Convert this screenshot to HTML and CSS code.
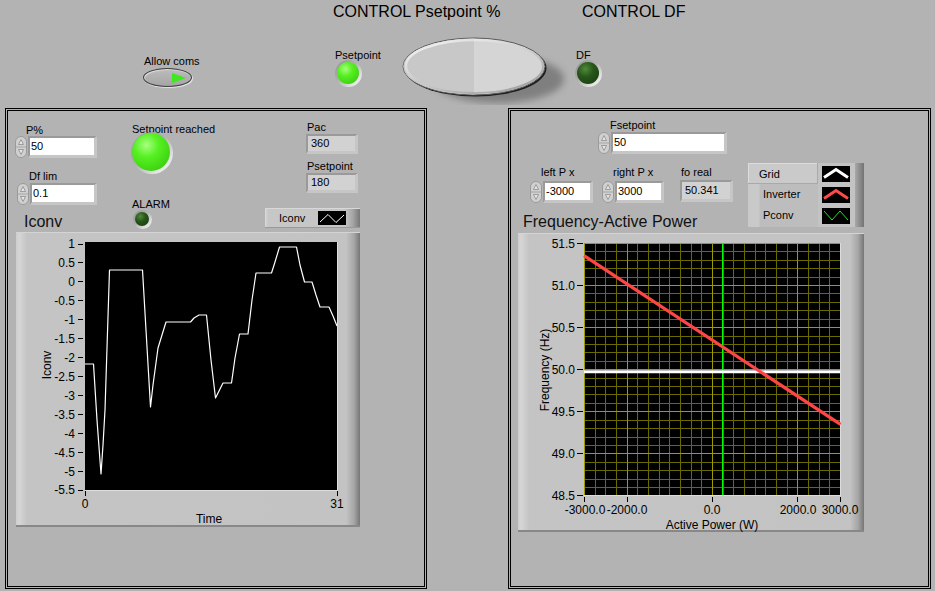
FILE: index.html
```html
<!DOCTYPE html>
<html lang="en">
<head>
<meta charset="utf-8">
<title>Front Panel</title>
<link rel="stylesheet" href="styles.css">
</head>
<body>
<div class="page">
  <header class="top">
    <div class="allow">
      <div class="lbl">Allow coms</div>
      <div class="toggle"><span class="tri"></span></div>
    </div>
    <div class="grp-pset">
      <div class="title">CONTROL Psetpoint %</div>
      <div class="pset-row">
        <div class="ledblock pset-led">
          <div class="lbl">Psetpoint</div>
          <div class="ring r27"><div class="led on"></div></div>
        </div>
        <svg class="bigbtn" width="170" height="70" viewBox="0 0 170 70">
          <defs>
            <filter id="sb" x="-30%" y="-30%" width="160%" height="160%"><feGaussianBlur stdDeviation="3.5"/></filter>
            <clipPath id="lh"><rect x="0" y="0" width="74" height="70"/></clipPath>
            <linearGradient id="hl" x1="0" y1="0" x2="1" y2="1">
              <stop offset="0" stop-color="#ffffff" stop-opacity="0.95"/>
              <stop offset="0.45" stop-color="#ffffff" stop-opacity="0"/>
            </linearGradient>
            <linearGradient id="dk" x1="0" y1="0" x2="1" y2="1">
              <stop offset="0.5" stop-color="#8a8a8a" stop-opacity="0"/>
              <stop offset="1" stop-color="#8a8a8a" stop-opacity="0.9"/>
            </linearGradient>
          </defs>
          <ellipse cx="98" cy="44" rx="66" ry="24" fill="#6e6e6e" opacity="0.75" filter="url(#sb)"/>
          <ellipse cx="75.5" cy="33" rx="71" ry="28.5" fill="#1e1e1e"/>
          <ellipse cx="74" cy="31.5" rx="71" ry="28.5" fill="#d5d5d5" stroke="#5a5a5a" stroke-width="1"/>
          <ellipse cx="74" cy="31.5" rx="70.5" ry="28" fill="#c8c8c8" clip-path="url(#lh)"/>
          <ellipse cx="74" cy="31" rx="68" ry="26" fill="none" stroke="url(#hl)" stroke-width="2.5"/>
          <ellipse cx="74" cy="31.5" rx="69" ry="26.5" fill="none" stroke="url(#dk)" stroke-width="2"/>
        </svg>
      </div>
    </div>
    <div class="grp-df">
      <div class="title">CONTROL DF</div>
      <div class="ledblock df-led">
        <div class="lbl">DF</div>
        <div class="ring r27"><div class="led off"></div></div>
      </div>
    </div>
  </header>

  <main class="panels">
    <section class="panel left">
      <div class="ctrls">
        <div class="colA">
          <div class="lbl l-p">P%</div>
          <div class="num n-p">
            <svg class="spin" width="12" height="22" viewBox="0 0 12 22"><rect x="0.5" y="0.5" width="11" height="21" rx="5.5" fill="#d0d0d0" stroke="#9a9a9a"/><line x1="1" y1="11" x2="11" y2="11" stroke="#a6a6a6"/><path d="M3.5 8.5 L6 3.5 L8.5 8.5 Z" fill="#e4e4e4" stroke="#8c8c8c" stroke-width="0.8"/><path d="M3.5 13.5 L6 18.5 L8.5 13.5 Z" fill="#e4e4e4" stroke="#8c8c8c" stroke-width="0.8"/></svg>
            <div class="field w69">50</div>
          </div>
          <div class="lbl l-df">Df lim</div>
          <div class="num n-df">
            <svg class="spin" width="12" height="22" viewBox="0 0 12 22"><rect x="0.5" y="0.5" width="11" height="21" rx="5.5" fill="#d0d0d0" stroke="#9a9a9a"/><line x1="1" y1="11" x2="11" y2="11" stroke="#a6a6a6"/><path d="M3.5 8.5 L6 3.5 L8.5 8.5 Z" fill="#e4e4e4" stroke="#8c8c8c" stroke-width="0.8"/><path d="M3.5 13.5 L6 18.5 L8.5 13.5 Z" fill="#e4e4e4" stroke="#8c8c8c" stroke-width="0.8"/></svg>
            <div class="field w67">0.1</div>
          </div>
          <div class="gtitle gt-left">Iconv</div>
        </div>
        <div class="colB">
          <div class="lbl l-sr">Setpoint reached</div>
          <div class="ring big"><div class="led on"></div></div>
          <div class="lbl l-al">ALARM</div>
          <div class="ring small"><div class="led off"></div></div>
        </div>
        <div class="colC">
          <div class="lbl l-ind">Pac</div>
          <div class="ind i-pac">360</div>
          <div class="lbl l-ind l-ps">Psetpoint</div>
          <div class="ind i-ps">180</div>
          <div class="legend1">
            <span class="ltext">Iconv</span>
            <svg width="28" height="14" viewBox="0 0 28 14"><rect width="28" height="14" fill="#000"/><polyline points="2,11 10,3.5 18,11.5 26,4" fill="none" stroke="#fff" stroke-width="1"/></svg>
          </div>
        </div>
      </div>
      <div class="gframe gf-left">
        <svg width="344" height="295" viewBox="16 232 344 295" class="chart">
          <rect x="85" y="242" width="252" height="248" fill="#000"/>
          <path d="M337.5 242V490.5M85 490.5H338" stroke="#dedede" stroke-width="1"/>
          <path d="M78 244.5H83M78 262.5H83M78 281.5H83M78 300.5H83M78 319.5H83M78 338.5H83M78 357.5H83M78 376.5H83M78 395.5H83M78 414.5H83M78 433.5H83M78 452.5H83M78 471.5H83M78 490.5H83M85.5 491V496M337.5 491V496" stroke="#000" stroke-width="1"/>
          <g class="ax" text-anchor="end">
            <text x="75" y="248">1</text>
            <text x="75" y="267">0.5</text>
            <text x="75" y="286">0</text>
            <text x="75" y="305">-0.5</text>
            <text x="75" y="324">-1</text>
            <text x="75" y="343">-1.5</text>
            <text x="75" y="362">-2</text>
            <text x="75" y="381">-2.5</text>
            <text x="75" y="400">-3</text>
            <text x="75" y="419">-3.5</text>
            <text x="75" y="438">-4</text>
            <text x="75" y="457">-4.5</text>
            <text x="75" y="476">-5</text>
            <text x="75" y="494">-5.5</text>
          </g>
          <g class="ax" text-anchor="middle">
            <text x="85" y="508">0</text>
            <text x="337" y="508">31</text>
            <text x="209" y="523">Time</text>
            <text x="47" y="369" transform="rotate(-90 47 365)">Iconv</text>
          </g>
          <polyline fill="none" stroke="#fff" stroke-width="1.2" stroke-linejoin="round" points="85,364 93.5,364 97,420 101,474 103,445 105,410 109.5,270 142.5,270 146,330 150.5,407 153,385 158,348 166,322 190.5,322 194,318 199,315 206.5,315 211,360 215.5,398 219,391 223,383 231.5,383 235,358 239.5,334 248,334 252,300 256,273 271.5,273 275,262 279.5,247 296.5,247 300,265 304.5,282 312,282 316,295 320,307 329,307 333,316 337,326"/>
        </svg>
      </div>
    </section>

    <section class="panel right">
      <div class="ctrls">
        <div class="rcol">
          <div class="fset">
            <div class="lbl">Fsetpoint</div>
            <div class="num">
              <svg class="spin" width="12" height="22" viewBox="0 0 12 22"><rect x="0.5" y="0.5" width="11" height="21" rx="5.5" fill="#d0d0d0" stroke="#9a9a9a"/><line x1="1" y1="11" x2="11" y2="11" stroke="#a6a6a6"/><path d="M3.5 8.5 L6 3.5 L8.5 8.5 Z" fill="#e4e4e4" stroke="#8c8c8c" stroke-width="0.8"/><path d="M3.5 13.5 L6 18.5 L8.5 13.5 Z" fill="#e4e4e4" stroke="#8c8c8c" stroke-width="0.8"/></svg>
              <div class="field w116">50</div>
            </div>
          </div>
          <div class="row3">
            <div class="item lpx">
              <div class="lbl">left P x</div>
              <div class="num">
                <svg class="spin" width="12" height="22" viewBox="0 0 12 22"><rect x="0.5" y="0.5" width="11" height="21" rx="5.5" fill="#d0d0d0" stroke="#9a9a9a"/><line x1="1" y1="11" x2="11" y2="11" stroke="#a6a6a6"/><path d="M3.5 8.5 L6 3.5 L8.5 8.5 Z" fill="#e4e4e4" stroke="#8c8c8c" stroke-width="0.8"/><path d="M3.5 13.5 L6 18.5 L8.5 13.5 Z" fill="#e4e4e4" stroke="#8c8c8c" stroke-width="0.8"/></svg>
                <div class="field w50">-3000</div>
              </div>
            </div>
            <div class="item rpx">
              <div class="lbl">right P x</div>
              <div class="num">
                <svg class="spin" width="12" height="22" viewBox="0 0 12 22"><rect x="0.5" y="0.5" width="11" height="21" rx="5.5" fill="#d0d0d0" stroke="#9a9a9a"/><line x1="1" y1="11" x2="11" y2="11" stroke="#a6a6a6"/><path d="M3.5 8.5 L6 3.5 L8.5 8.5 Z" fill="#e4e4e4" stroke="#8c8c8c" stroke-width="0.8"/><path d="M3.5 13.5 L6 18.5 L8.5 13.5 Z" fill="#e4e4e4" stroke="#8c8c8c" stroke-width="0.8"/></svg>
                <div class="field w49">3000</div>
              </div>
            </div>
            <div class="item fo">
              <div class="lbl">fo real</div>
              <div class="ind i-fo">50.341</div>
            </div>
          </div>
          <div class="gtitle gt-right">Frequency-Active Power</div>
        </div>
        <div class="legend2">
          <div class="lcell first">Grid</div>
          <div class="scell"><svg width="28" height="16" viewBox="0 0 28 16"><rect width="28" height="16" fill="#000"/><polyline points="2,11.5 14,3.5 26,11.5" fill="none" stroke="#fff" stroke-width="3"/></svg></div>
          <div class="ecell"></div>
          <div class="lcell">Inverter</div>
          <div class="scell"><svg width="28" height="16" viewBox="0 0 28 16"><rect width="28" height="16" fill="#000"/><polyline points="2,11.5 14,3.5 26,11.5" fill="none" stroke="#ff4a4a" stroke-width="3"/></svg></div>
          <div class="ecell"></div>
          <div class="lcell">Pconv</div>
          <div class="scell"><svg width="28" height="16" viewBox="0 0 28 16"><rect width="28" height="16" fill="#000"/><polyline points="2,3 10,12 18,3 26,12" fill="none" stroke="#22dd22" stroke-width="1"/></svg></div>
          <div class="ecell"></div>
        </div>
      </div>
      <div class="gframe gf-right">
        <svg width="346" height="299" viewBox="518 233 346 299" class="chart">
          <rect x="584" y="243" width="257" height="253" fill="#000"/>
          <path class="gmin" d="M595.5 243V496M605.5 243V496M616.5 243V496M637.5 243V496M648.5 243V496M659.5 243V496M669.5 243V496M680.5 243V496M691.5 243V496M701.5 243V496M723.5 243V496M733.5 243V496M744.5 243V496M755.5 243V496M765.5 243V496M776.5 243V496M787.5 243V496M808.5 243V496M819.5 243V496M829.5 243V496M584 251.5H841M584 260.5H841M584 268.5H841M584 277.5H841M584 293.5H841M584 302.5H841M584 310.5H841M584 319.5H841M584 336.5H841M584 344.5H841M584 352.5H841M584 361.5H841M584 378.5H841M584 386.5H841M584 394.5H841M584 403.5H841M584 420.5H841M584 428.5H841M584 437.5H841M584 445.5H841M584 462.5H841M584 470.5H841M584 479.5H841M584 487.5H841"/>
          <path class="gmaj" d="M627.5 243V496M712.5 243V496M797.5 243V496M584 243.5H841M584 285.5H841M584 327.5H841M584 369.5H841M584 411.5H841M584 453.5H841M584.5 243V496"/>
          <path d="M840.5 243V496.5M584 495.5H841" stroke="#dcdcdc" stroke-width="1"/>
          <line x1="722.5" y1="243" x2="722.5" y2="495" stroke="#00ff00" stroke-width="1"/>
          <line x1="584" y1="371.7" x2="840" y2="371.7" stroke="#ffffff" stroke-width="3"/>
          <line x1="584" y1="255.7" x2="840.5" y2="424.4" stroke="#ff4646" stroke-width="3.2"/>
          <path d="M577 243.5H583M577 285.5H583M577 327.5H583M577 369.5H583M577 411.5H583M577 453.5H583M577 495.5H583M584.5 497V502M627.5 497V502M712.5 497V502M797.5 497V502M840.5 497V502" stroke="#000" stroke-width="1"/>
          <g class="ax" text-anchor="end">
            <text x="575" y="248">51.5</text>
            <text x="575" y="290">51.0</text>
            <text x="575" y="332">50.5</text>
            <text x="575" y="374">50.0</text>
            <text x="575" y="416">49.5</text>
            <text x="575" y="458">49.0</text>
            <text x="575" y="500">48.5</text>
          </g>
          <g class="ax" text-anchor="middle">
            <text x="585" y="514">-3000.0</text>
            <text x="627" y="514">-2000.0</text>
            <text x="712" y="514">0.0</text>
            <text x="798" y="514">2000.0</text>
            <text x="840" y="514">3000.0</text>
            <text x="712" y="529">Active Power (W)</text>
            <text x="545" y="374" transform="rotate(-90 545 370)">Frequency (Hz)</text>
          </g>
        </svg>
      </div>
    </section>
  </main>
</div>
</body>
</html>
```

FILE: styles.css
```css
* { box-sizing: border-box; margin: 0; padding: 0; }
html, body { width: 935px; height: 591px; overflow: hidden; }
body {
  background: #b3b3b3;
  font-family: "Liberation Sans", Arial, sans-serif;
  font-size: 11px;
  color: #000;
}
.page { width: 935px; height: 591px; }
.lbl { font-size: 11px; line-height: 12px; white-space: nowrap; }

/* ---------- header ---------- */
.top { display: flex; align-items: flex-start; height: 108px; }
.allow { margin-left: 143px; margin-top: 55px; width: 52px; display: flex; flex-direction: column; }
.allow .lbl { margin-left: 1px; }
.toggle {
  margin-top: 1px; width: 49px; height: 19px; border-radius: 50%;
  background: linear-gradient(#bcbcbc, #a5a5a5);
  border: 1px solid #3e3e3e;
  box-shadow: 1px 1px 1px rgba(255,255,255,0.7), inset 1px 1px 1px rgba(255,255,255,0.5);
  display: flex; align-items: center; justify-content: flex-end; padding-right: 5px;
}
.tri { width: 0; height: 0; border-left: 14px solid #3ee81f; border-top: 5px solid transparent; border-bottom: 5px solid transparent; }
.grp-pset { margin-left: 138px; display: flex; flex-direction: column; }
.title { font-size: 16px; line-height: 19px; margin-top: 2px; white-space: nowrap; }
.pset-row { display: flex; align-items: flex-start; }
.ledblock { display: flex; flex-direction: column; margin-top: 28px; }
.ledblock .ring { margin-top: -1px; }
.pset-led { margin-left: 2px; width: 45px; }
.bigbtn { display: block; margin-left: 20px; margin-top: 14px; flex: none; }
.grp-df { margin-left: 5px; display: flex; flex-direction: column; }
.grp-df .title { margin-left: 7px; }
.df-led .lbl { margin-left: 1px; }

/* ---------- LEDs ---------- */
.ring {
  border-radius: 50%;
  background: linear-gradient(135deg, #8e8e8e 0%, #b2b2b2 45%, #e6e6e6 80%, #f6f6f6 100%);
  flex: none;
}
.led { border-radius: 50%; width: 100%; height: 100%; }
.led.on { background: radial-gradient(circle at 38% 32%, #a8ff80 0%, #56f022 35%, #3fd412 75%, #2eaa0c 100%); }
.led.off { background: radial-gradient(circle at 38% 32%, #4f8a3a 0%, #28561a 40%, #1c4212 80%, #143208 100%); }
.r27 { width: 27px; height: 27px; padding: 2px 3px 3px 2px; }
.big { width: 42px; height: 42px; padding: 1px 3px 3px 1px; }
.small { width: 19px; height: 19px; padding: 2px 3px 3px 2px; }

/* ---------- panels ---------- */
.panels { display: flex; gap: 81px; margin-left: 5px; }
.panel { border: 3px double #000; height: 481px; display: flex; flex-direction: column; }
.panel.left { width: 422px; }
.panel.right { width: 423px; }
.ctrls { display: flex; align-items: flex-start; flex: none; }
.left .ctrls { height: 121px; }
.right .ctrls { height: 122px; }

.num { display: flex; height: 22px; }
.spin { display: block; flex: none; }
.field {
  margin-left: 1px; height: 22px; background: #fff;
  border-style: solid; border-width: 2px 3px 3px 2px;
  border-color: #9a9a9a #c6c6c6 #c6c6c6 #9a9a9a;
  font-size: 11px; line-height: 17px; padding-left: 1px; white-space: nowrap;
}
.w69 { width: 69px; }
.w67 { width: 67px; }
.w116 { width: 116px; }
.w50 { width: 50px; }
.w49 { width: 49px; }
.ind {
  height: 20px; background: #d2d2d2;
  border-style: solid; border-width: 2px 3px 3px 2px;
  border-color: #9a9a9a #c6c6c6 #c6c6c6 #9a9a9a;
  font-size: 11px; line-height: 15px; padding-left: 3px; white-space: nowrap;
}
.gtitle { font-size: 16px; line-height: 20px; white-space: nowrap; color: #111; }

/* left panel columns */
.colA { margin-left: 7px; width: 84px; display: flex; flex-direction: column; }
.l-p { margin-top: 13px; margin-left: 11px; }
.n-p { margin-top: 0; }
.l-df { margin-top: 12px; margin-left: 14px; }
.n-df { margin-top: 1px; margin-left: 2px; }
.gt-left { margin-top: 7px; margin-left: 9px; }

.colB { margin-left: 31px; width: 90px; display: flex; flex-direction: column; align-items: flex-start; }
.l-sr { margin-top: 12px; margin-left: 2px; }
.colB .big { margin-top: -3px; margin-left: 1px; }
.l-al { margin-top: 24px; margin-left: 2px; }
.colB .small { margin-left: 3px; }

.colC { margin-left: 45px; width: 95px; display: flex; flex-direction: column; align-items: flex-start; }
.l-ind { margin-left: 42px; margin-top: 10px; }
.l-ps { margin-top: 6px; }
.i-pac, .i-ps { margin-left: 41px; margin-top: 1px; width: 52px; }
.legend1 {
  margin-top: 15px; width: 95px; height: 20px; display: flex; align-items: center;
  background: linear-gradient(to right, #dadada 0, #c7c7c7 3px, #c5c5c5 calc(100% - 15px), #a4a4a4 calc(100% - 7px), #777 100%);
  box-shadow: inset 0 -1px 0 #9a9a9a, inset 0 1px 0 #d8d8d8;
}
.legend1 .ltext { margin-left: 14px; flex: 1; }
.legend1 svg { display: block; margin-right: 14px; }

/* graph frames */
.gframe {
  flex: none;
  background: linear-gradient(to right, #cdcdcd 0, #d6d6d6 3px, #c4c4c4 11px, #c3c3c3 calc(100% - 14px), #a6a6a6 calc(100% - 6px), #767676 100%);
  box-shadow: inset 0 -2px 0 #888, inset 0 1px 0 #d4d4d4;
}
.gframe svg { display: block; }
.gf-left { margin-left: 8px; width: 344px; height: 295px; }
.gf-right { margin-left: 7px; width: 346px; height: 299px; }
.chart .ax { font-family: "Liberation Sans", Arial, sans-serif; font-size: 12px; fill: #000; }
.gmin { stroke: #6a6a00; stroke-width: 1; fill: none; }
.gmaj { stroke: #9c9c00; stroke-width: 1; fill: none; }

/* right panel */
.rcol { width: 237px; display: flex; flex-direction: column; align-items: flex-start; }
.fset { margin-left: 87px; margin-top: 8px; display: flex; flex-direction: column; }
.fset .lbl { margin-left: 12px; }
.fset .num { margin-top: 1px; }
.row3 { display: flex; align-items: flex-start; margin-top: 12px; }
.item { display: flex; flex-direction: column; }
.item .lbl { margin-left: 11px; }
.item .num { margin-top: 3px; }
.lpx { margin-left: 19px; }
.rpx { margin-left: 9px; }
.fo { margin-left: 16px; }
.fo .lbl { margin-left: 1px; }
.i-fo { margin-top: 2px; width: 53px; height: 22px; line-height: 17px; }
.gt-right { margin-top: 9px; margin-left: 12px; }

.legend2 {
  margin-top: 52px; width: 116px; height: 64px;
  display: grid; grid-template-columns: 70px 37px 9px; grid-template-rows: 21px 21px 22px;
  background: #c0c0c0;
  box-shadow: inset 0 -1px 0 #8e8e8e;
}
.lcell { font-size: 11px; line-height: 21px; padding-left: 15px; background: linear-gradient(to right, #c9c9c9 0, #c9c9c9 11px, #bdbdbd 12px); white-space: nowrap; }
.lcell.first { padding-left: 11px; padding-top: 2px; line-height: 19px; background: #cacaca; box-shadow: inset -1px -1px 0 #a9a9a9, inset 1px 1px 0 #dcdcdc; }
.scell { padding-left: 4px; padding-top: 3px; background: #c3c3c3; }
.scell svg { display: block; }
.ecell { background: linear-gradient(to right, #a8a8a8, #747474); }
```
